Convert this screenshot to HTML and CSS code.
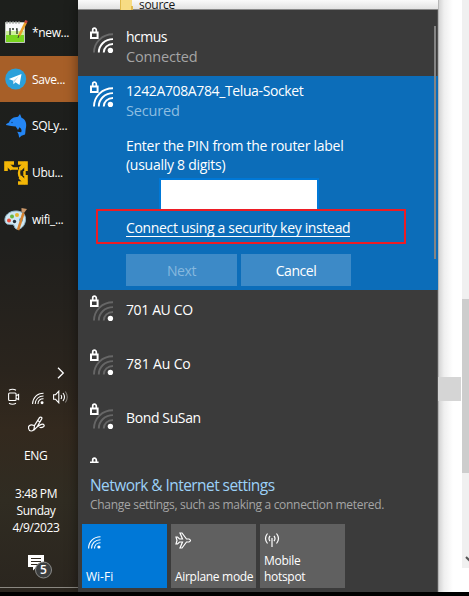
FILE: index.html
```html
<!DOCTYPE html>
<html lang="en">
<head>
<meta charset="utf-8">
<title>Network flyout</title>
<link rel="stylesheet" href="styles.css">
</head>
<body>
<svg class="defs" aria-hidden="true">
  <defs>
    <symbol id="lock" viewBox="0 0 9 12">
      <path d="M2.7 5V3a1.8 1.8 0 0 1 3.6 0v2" fill="none" stroke="#fff" stroke-width="1.7"/>
      <path fill-rule="evenodd" d="M0 4.5h8.6V12H0zM2 6.5v3.4h4.6V6.5z" fill="#fff"/>
    </symbol>
    <symbol id="net" viewBox="0 0 24 26">
      <g fill="none" stroke-width="1.9">
        <path class="a3" d="M4 25.5C4 15.3 12.300 7.300 23 7.300"/>
        <path class="a2" d="M8.800 25.500C8.800 18 15 12.100 23 12.100"/>
        <path class="a1" d="M13.700 25.500C13.700 20.600 18 17 23 17"/>
      </g>
      <circle cx="20.400" cy="23.500" r="2.700" fill="#fff"/>
      <use href="#lock" width="9" height="12"/>
    </symbol>
    <symbol id="wifi" viewBox="0 0 13 13">
      <g fill="none" stroke="#fff" stroke-width="1.100">
        <path d="M.6 12.500C.6 5.800 5.500.7 12.500.7" class="outer"/>
        <path d="M3.500 12.500C3.500 7.500 7.300 3.700 12.500 3.700"/>
        <path d="M6.500 12.500C6.500 9 9 6.700 12.500 6.700"/>
      </g>
      <circle cx="10.900" cy="11" r="1.600" fill="#fff"/>
    </symbol>
  </defs>
</svg>
<div class="screen">
  <div class="desktop">
    <aside class="taskbar">
      <div class="app">
        <svg width="24" height="26" viewBox="0 0 24 26">
          <path d="M1.500 3.500h19v20h-19z" fill="#fafafa" stroke="#bfc6bd"/>
          <path d="M2 15h18v8H2z" fill="#79d51f"/><path d="M2 12h18v4H2z" fill="#cdf19a"/>
          <path d="M3 2v3M6 2v3M9 2v3M12 2v3M15 2v3" stroke="#999"/>
          <path d="M6 9v7M8 10h2M12 10h1v5" stroke="#253022" stroke-width="1.300" fill="none"/>
          <path d="M22 3 15 17" stroke="#e8a02a" stroke-width="2.600"/><path d="m22.500 1.500-1 2.500" stroke="#c9473a" stroke-width="2.600"/><path d="m15 16-1 3" stroke="#443"/>
        </svg>
        <span class="t-new">*new...</span>
      </div>
      <div class="app active">
        <svg width="24" height="24" viewBox="0 0 24 24"><circle cx="11.700" cy="12" r="10.500" fill="#2ba0da"/><path d="M4.800 12 17.500 7l-2 11-4-2.700-2 1.900-.3-3.400L4.800 12Z" fill="#fff"/><path d="m9.200 13.800 5.300-4.200-3.800 5.200-1.300 2z" fill="#b5d7ec"/></svg>
        <span class="t-save">Save...</span>
      </div>
      <div class="app">
        <svg width="24" height="26" viewBox="0 0 24 26"><path d="M2 12c0-1.500 2-2 3-2.500 1.500-4 5-5.500 9-5.700L16 1l1.500 3.700C22 6.500 23 11 21.700 16c-.4 2.500-.2 3.500-.7 5.500l-3.500 1.300-2.300 2-.7-3.500-1.300-2.600 4 .5c1-2 0-4-1.700-5L14 17l-2.300-3.500C8 13 6 13 4.500 12.500z" fill="#2486f5"/><circle cx="8" cy="9.500" r=".7" fill="#0c3d7c"/></svg>
        <span class="t-sql">SQLy...</span>
      </div>
      <div class="app">
        <svg width="24" height="24" viewBox="0 0 24 24"><g fill="none" stroke="#f4b707"><path d="M10 2H2v8M14 2h8v8M22 14v8h-8" stroke-width="3.600"/><path d="m2 2 6 6M22 2l-6 6M22 22l-6-6" stroke-width="4"/><path d="M6 7.500h8M16.500 7q-3 5 0 10M20.500 10v5" stroke-width="2.400"/></g></svg>
        <span class="t-ubu">Ubu...</span>
      </div>
      <div class="app">
        <svg width="24" height="24" viewBox="0 0 24 24"><path d="M1 13C0 7 6 2.500 13 3c6 .5 9 4 8.500 9-.5 6-5 10-9 9-3-.8-1-4-4-4.500C6 16 2 17.500 1 13z" fill="#d0e7f2" stroke="#8eb5c8"/><circle cx="5" cy="12.500" r="2" fill="#e84d3b"/><circle cx="8" cy="8.500" r="2" fill="#69b642"/><circle cx="13" cy="7" r="2" fill="#e5b62e"/><circle cx="10.500" cy="13.500" r="1.700" fill="#22303a"/><circle cx="17" cy="12" r="2" fill="#43a2df"/><path d="m14 22 5.500-17" stroke="#d58330" stroke-width="2.500"/><path d="m17.500 0 5.500 1-3 4-2.500-1z" fill="#c99669"/></svg>
        <span class="t-wifi">wifi_...</span>
      </div>
      <div class="tray">
        <svg class="chev" width="8" height="12" viewBox="0 0 8 12"><path d="m1 .7 5.300 5.300L1 11.300" fill="none" stroke="#fff" stroke-width="1.300"/></svg>
        <div class="icons">
          <svg width="12" height="18" viewBox="0 0 12 18"><g fill="none" stroke="#fff" stroke-width="1.100"><rect x=".6" y="5" width="7.500" height="7.500" rx="1"/><path d="m8.100 7.800 2.500-1.300v5l-2.500-1.300M1 2.200q3.500-2 7 0M1 15.300q3.500 2 7 0"/></g></svg>
          <svg class="dim" width="12" height="13"><use href="#wifi"/></svg>
          <svg width="17" height="14" viewBox="0 0 17 14"><g fill="none" stroke="#fff" stroke-width="1.100"><path d="M.6 4.700h2l3.200-3.500v11.600L2.600 9.300h-2zM8 5q1.300 2 0 4M10 3q3 4 0 8"/><path d="M12.300 1.500q4 5.500 0 11" opacity=".4"/></g></svg>
        </div>
        <svg class="pen" width="17" height="17" viewBox="0 0 17 17"><path d="M6 9.500C2 8 0 10 .6 12.500 1 15.500 5 16 6 13l.5-3.500L11.500 1.700c1-1.400 3-.3 2.200 1.200L9 11l-3 3M9 11c3-2.500 6-4 7-2s-2.500 3-4.500 2.300M9.500 4.500 12 6" fill="none" stroke="#fff" stroke-width="1.200"/></svg>
        <div class="lang">ENG</div>
        <div class="clock"><span class="t-time">3:48 PM</span><span class="t-day">Sunday</span><span class="t-date">4/9/2023</span></div>
        <div class="action">
          <svg width="25" height="26" viewBox="0 0 25 26"><path d="M0 1h16v12H8.500L5 16.500V13H0z" fill="#fff"/><path d="M3 4.500h10M3 7.500h10M3 10.500h7" stroke="#30291f"/><circle cx="15.500" cy="16" r="8" fill="#3c3e3f" stroke="#8b8b89"/></svg>
          <span class="badge">5</span>
        </div>
      </div>
    </aside>
    <main>
      <header>
        <svg width="14" height="10" viewBox="0 0 14 10"><path d="M0 0h12v10H0z" fill="#f7dc84"/><path d="M0 0h1v10H0zM11 6h2v4h-2z" fill="#dfb94c"/></svg>
        <span class="t-source">source</span>
      </header>
      <section class="flyout">
        <div class="networks">
          <div class="row partial"><svg class="net" width="24" height="26"><use href="#net"/></svg><div class="info"><b class="n-hc">hcmus</b><small class="n-con">Connected</small></div></div>
          <div class="selected">
            <div class="row full"><svg class="net" width="24" height="26"><use href="#net"/></svg><div class="info"><b class="n-tel">1242A708A784_Telua-Socket</b><small class="n-sec">Secured</small></div></div>
            <p><span class="p1">Enter the PIN from the router label</span><br><span class="p2">(usually 8 digits)</span></p>
            <div class="pin"></div>
            <div class="mark"><span class="link">Connect using a security key instead</span></div>
            <div class="buttons"><div class="btn off"><span>Next</span></div><div class="btn cancel"><span>Cancel</span></div></div>
          </div>
          <div class="row none"><svg class="net" width="24" height="26"><use href="#net"/></svg><div class="info"><b class="n-701">701 AU CO</b></div></div>
          <div class="row none"><svg class="net" width="24" height="26"><use href="#net"/></svg><div class="info"><b class="n-781">781 Au Co</b></div></div>
          <div class="row none"><svg class="net" width="24" height="26"><use href="#net"/></svg><div class="info"><b class="n-bond">Bond SuSan</b></div></div>
          <div class="row none cut"><svg class="net" width="24" height="26"><use href="#net"/></svg></div>
          <div class="scroll"></div>
        </div>
        <div class="settings"><span class="s1">Network &amp; Internet settings</span><span class="s2">Change settings, such as making a connection metered.</span></div>
        <div class="tiles">
          <div class="tile on"><svg class="tw" width="13" height="13"><use href="#wifi"/></svg><span class="w1">Wi-Fi</span></div>
          <div class="tile"><svg width="17" height="17" viewBox="0 0 17 17"><path d="M1 5h1.500l2 2h3L5 1h2l4.500 6H14q3 1.500 0 3h-2.500L7 16H5l2.500-6h-3l-2 2H1l1-3.500z" fill="none" stroke="#fff" stroke-width="1.200"/></svg><span class="w2">Airplane mode</span></div>
          <div class="tile"><svg width="16" height="16" viewBox="0 0 16 16"><path d="M3.500 1.500q-4 5 0 10M6 3.800q-2 2.700 0 5.400M10 3.800q2 2.700 0 5.400M12.500 1.500q4 5 0 10M8 6v9" fill="none" stroke="#fff" stroke-width="1.200"/></svg><span><span class="w3">Mobile</span><br><span class="w4">hotspot</span></span></div>
        </div>
      </section>
    </main>
    <div class="window"><div class="strip"></div></div>
    <div class="track"><div class="thumb"></div><svg width="7" height="8" viewBox="0 0 7 8"><path d="m4 1 4 4" stroke="#555" stroke-width="2"/></svg></div>
  </div>
</div>
</body>
</html>
```
FILE: styles.css
```css
* { box-sizing: border-box; }
body { margin: 0; background: #000; font-family: "Open Sans", "Noto Sans", sans-serif; color: #fff; overflow: hidden; }
.defs { position: absolute; width: 0; height: 0; }
svg { display: block; flex: none; }
span, b, small { white-space: nowrap; }
.screen { width: 469px; height: 596px; }
.desktop { display: flex; height: 592px; background: #fff; }
.taskbar { width: 78px; display: flex; flex-direction: column; background: linear-gradient(#1d1f1c 0, #1f1f1d 240px, #2a241d 370px, #33291e 430px, #302c22 500px, #2b261f 587px, #8a8781 587px, #8a8781 588px, #2b261f 588px); }
.app { display: flex; align-items: center; gap: 4px; padding-left: 4px; height: 47px; font-size: 12px; letter-spacing: -.35px; }
.app:first-child { height: 56px; padding-top: 8px; }
.app.active { background: #a75f28; height: 46px; }
.tray { display: flex; flex-direction: column; flex: 1; padding-top: 124px; font-size: 12px; }
.chev { margin-left: 57px; }
.icons { display: flex; align-items: center; gap: 12px; margin: 9px 0 0 8px; height: 18px; }
.icons svg:nth-child(3) { margin-left: -3px; }
.dim { margin-top: 3px; }
.dim .outer { opacity: .5; }
.pen { margin: 10px 0 0 28px; }
.lang { margin: 14px auto 0 24px; line-height: 18px; letter-spacing: -.3px; }
.clock { display: flex; flex-direction: column; width: 72px; align-items: center; line-height: 17px; margin-top: 20px; letter-spacing: -.4px; }
.action { position: relative; margin: 18px 0 0 28px; width: 25px; }
.badge { position: absolute; left: 12px; top: 8px; font-size: 12px; line-height: 16px; font-weight: 600; }
main { width: 360px; display: flex; flex-direction: column; box-shadow: 0 0 12px #0007; }
header { height: 10px; display: flex; gap: 5px; padding-left: 42px; background: linear-gradient(#fafafa 0, #e2e2e2 9px, #888 9px); color: #171717; font-size: 12px; letter-spacing: -.3px; }
header span { line-height: 10px; }
.flyout { flex: 1; background: #3b3b3b; border-right: 1px solid #555; }
.networks { position: relative; height: 453px; padding-top: 12px; overflow: hidden; width: 360px; }
.row { height: 54px; display: flex; gap: 12px; padding: 5px 0 0 12px; --c1: #fff; --c2: #fff; --c3: #fff; }
.partial { --c3: #696969; }
.none { --c1: #666; --c2: #666; --c3: #666; }
.none .info { padding-top: 5px; }
.a1 { stroke: var(--c1); }
.a2 { stroke: var(--c2); }
.a3 { stroke: var(--c3); }
.info { display: flex; flex-direction: column; align-items: flex-start; line-height: 20px; font-size: 14px; }
b { font-weight: 400; letter-spacing: -.38px; }
.n-hc { letter-spacing: -.5px; }
.n-781 { letter-spacing: -.15px; }
small { font-size: 14.5px; color: #a5a5a5; letter-spacing: -.15px; }
.selected { height: 214px; background: #0c6db9; }
.selected small { color: #8ebee1; }
p { margin: 6px 0 0 48px; font-size: 14px; line-height: 19px; letter-spacing: -.27px; }
.pin { width: 160px; height: 33px; margin: 4px 0 0 81px; border: 2px solid #0078d7; background: #fff; }
.mark { position: relative; margin: -2px 0 0 18px; width: 310px; height: 35px; border: 2px solid #ed1c24; padding: 7px 0 0 28px; font-size: 14px; line-height: 20px; }
.link { display: inline-block; line-height: 17px; height: 18px; border-bottom: 1px solid #fff; letter-spacing: -.33px; }
.buttons { display: flex; gap: 4px; margin: 10px 0 0 48px; }
.btn { height: 32px; width: 111px; display: flex; align-items: center; justify-content: center; background: #3d8ac7; font-size: 14px; letter-spacing: -.45px; }
.btn.cancel { width: 110px; }
.off { color: #86b8de; }
.scroll { position: absolute; right: 2px; top: 16px; width: 2px; height: 233px; background: #848484; }
.settings { height: 61px; display: flex; flex-direction: column; align-items: flex-start; padding: 10px 0 0 12px; }
.s1 { font-size: 15.5px; line-height: 24px; color: #9bd1f8; letter-spacing: -.56px; }
.s2 { font-size: 12px; line-height: 16px; color: #a5a5a5; letter-spacing: -.3px; }
.tiles { display: flex; gap: 4px; padding-left: 4px; }
.tile { width: 85px; height: 64px; padding: 8px 0 3px 4px; display: flex; flex-direction: column; justify-content: space-between; background: #606060; font-size: 12px; line-height: 16px; letter-spacing: -.3px; }
.tile.on { background: #0078d7; letter-spacing: 0; }
.tw { margin: 4px 0 0 2px; }
.window { width: 24px; background: linear-gradient(90deg, #999 0, #d5d5d5 1px, #efefef 6px, #fff 15px); padding-top: 377px; }
.strip { width: 23px; height: 24px; background: #d5d5d5; }
.track { width: 7px; height: 568px; background: #f0f0f0; padding-top: 299px; }
.thumb { height: 174px; background: #cdcdcd; margin-bottom: 83px; }
```
